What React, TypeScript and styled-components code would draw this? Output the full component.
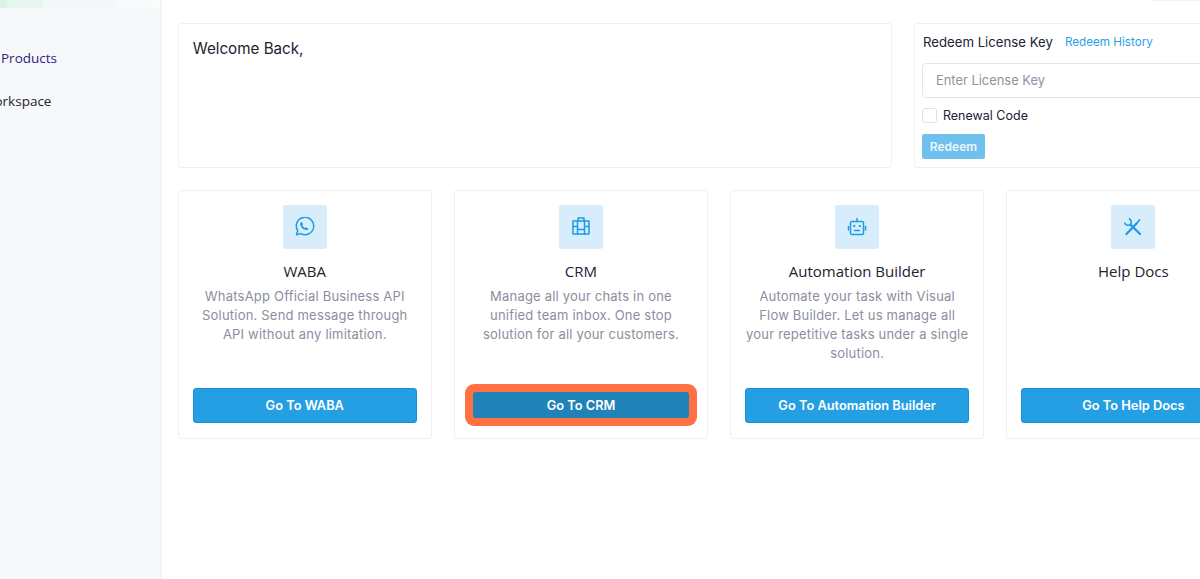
import React, { FC, ReactNode } from "react";
import styled, { createGlobalStyle } from "styled-components";

const GlobalStyle = createGlobalStyle`
  html, body {
    margin: 0;
    padding: 0;
    height: 100%;
    overflow: hidden;
    background: #fff;
  }
  * {
    box-sizing: border-box;
  }
`;

const Page = styled.div`
  position: relative;
  display: flex;
  width: 1200px;
  height: 579px;
  overflow: hidden;
  font-family: Inter, "Liberation Sans", sans-serif;
  background: #fff;
`;

const TopEdge = styled.div`
  position: absolute;
  top: 0;
  right: 0;
  width: 48px;
  height: 1px;
  background: #f1f1f9;
`;

const Sidebar = styled.aside`
  flex: 0 0 162px;
  display: flex;
  flex-direction: column;
  overflow: hidden;
  background: #f6f8fa;
  border-right: 2px solid #f2f3f5;
`;

const SidebarLogo = styled.div`
  flex: 0 0 8px;
  background: linear-gradient(
    90deg,
    #dcf3e8 0 7px,
    #e6f7ef 7px 43px,
    #f3f8f9 43px 115px,
    #f8fafb 115px 152px,
    #fbfdfc 152px
  );
`;

const NavList = styled.nav`
  display: flex;
  flex-direction: column;
  gap: 22px;
  padding-top: 40px;
`;

const NavItem = styled.div<{ $shift: number; $active?: boolean }>`
  margin-left: ${(p) => p.$shift}px;
  font-family: "Open Sans", sans-serif;
  font-size: 13.5px;
  line-height: 21px;
  white-space: nowrap;
  color: ${(p) => (p.$active ? "#2f1c82" : "#20242c")};
`;

const Main = styled.main`
  flex: 0 0 auto;
  display: flex;
  flex-direction: column;
  gap: 22px;
  padding: 23px 0 0 15.7px;
`;

const TopRow = styled.div`
  display: flex;
  gap: 21.6px;
`;

const Panel = styled.section`
  background: #fff;
  border: 1px solid #eef0f3;
  border-radius: 3px;
`;

const WelcomePanel = styled(Panel)`
  width: 714.7px;
  height: 145px;
  padding: 14px 14px;
`;

const WelcomeText = styled.div`
  font-size: 15.2px;
  line-height: 22px;
  color: #1d2233;
`;

const RedeemPanel = styled(Panel)`
  width: 340px;
  height: 145px;
  padding: 8px 7px;
`;

const RedeemHeader = styled.div`
  display: flex;
  align-items: center;
  gap: 12px;
  height: 20px;
  padding-left: 1px;
`;

const RedeemTitle = styled.div`
  font-size: 13.2px;
  color: #1d2233;
`;

const RedeemLink = styled.a`
  font-size: 11.7px;
  color: #2a9fe6;
`;

const KeyInput = styled.input`
  display: block;
  width: 100%;
  height: 35px;
  margin-top: 11px;
  padding: 0 13px;
  border: 1px solid #e3e5ea;
  border-radius: 4px;
  outline: none;
  font-family: inherit;
  font-size: 12.9px;
  &::placeholder {
    color: #8f93a3;
    opacity: 1;
  }
`;

const CheckRow = styled.label`
  display: flex;
  align-items: center;
  gap: 6px;
  margin-top: 10px;
  font-size: 12.5px;
  color: #1d2233;
`;

const CheckBox = styled.span`
  width: 15px;
  height: 15px;
  border: 1px solid #dfe1e6;
  border-radius: 3px;
  background: #fff;
`;

const RedeemButton = styled.button`
  display: block;
  width: 63px;
  height: 25px;
  margin-top: 11px;
  padding: 0;
  border: 0;
  border-radius: 2px;
  background: #70c0ee;
  color: #e9f6fd;
  font-family: inherit;
  font-size: 12px;
  font-weight: 600;
`;

const CardRow = styled.div`
  display: flex;
  gap: 22px;
`;

const Card = styled(Panel)`
  width: 254.2px;
  height: 249px;
  flex: 0 0 auto;
  display: flex;
  flex-direction: column;
  align-items: center;
  padding: 14px 14px 15px;
`;

const IconTile = styled.div`
  width: 44px;
  height: 44px;
  display: flex;
  align-items: center;
  justify-content: center;
  border-radius: 3px;
  background: #d7edfb;
  color: #1d9be4;
`;

const CardTitle = styled.h3`
  margin: 12px 0 0;
  font-family: "Open Sans", sans-serif;
  font-size: 15px;
  font-weight: 500;
  line-height: 20px;
  color: #20242c;
`;

const CardText = styled.p`
  flex: 1;
  margin: 6px 0 0;
  font-size: 13px;
  line-height: 19px;
  letter-spacing: 0.2px;
  text-align: center;
  white-space: pre-line;
  color: #8b8e9e;
`;

const CardButton = styled.button<{ $active?: boolean }>`
  align-self: stretch;
  height: ${(p) => (p.$active ? "26px" : "35px")};
  margin: ${(p) => (p.$active ? "4px 4px 5px" : "0")};
  padding: 0;
  border: ${(p) => (p.$active ? "0" : "1px solid #1b8fd6")};
  border-radius: 3px;
  background: ${(p) => (p.$active ? "#1f83ba" : "#259fe4")};
  box-shadow: ${(p) => (p.$active ? "0 0 0 8px #ff7043" : "none")};
  color: #fff;
  font-family: inherit;
  font-size: 12.8px;
  font-weight: 600;
`;

const Glyph: FC<{ children: ReactNode }> = ({ children }) => (
  <svg
    width="20"
    height="20"
    viewBox="0 0 20 20"
    fill="none"
    stroke="currentColor"
    strokeWidth="1.5"
    strokeLinecap="round"
    strokeLinejoin="round"
  >
    {children}
  </svg>
);

const WhatsappIcon = () => (
  <Glyph>
    <path d="M1.5 17.8l1.2-4.1A8.7 8.7 0 1 1 5.8 16.6z" />
    <path
      d="M6.8 4.9l1.3 2.3-.8 1a6 6 0 0 0 2.8 2.8l1-.8 2.2 1.2c-.2 1.1-1 1.7-2.1 1.6-3.4-.4-5.7-2.9-6-5.9-.1-1 .5-1.9 1.6-2.2z"
      fill="currentColor"
      stroke="none"
    />
  </Glyph>
);

const BriefcaseIcon = () => (
  <Glyph>
    <rect x="2" y="4" width="16" height="13" />
    <path d="M7 4V1h6v3M6.5 4v13M13.5 4v13M2 9.5h4.5M13.5 9.5H18M6.5 12.5h7" />
  </Glyph>
);

const RobotIcon = () => (
  <Glyph>
    <rect x="3.5" y="4.5" width="13" height="13" rx="1.5" />
    <path d="M10 1.5v3M1.5 9.5V13M18.5 9.5V13M7.5 13.5h5" />
    <path d="M7 9h.5M12.5 9h.5" strokeWidth="2" />
  </Glyph>
);

const ToolsIcon = () => (
  <Glyph>
    <path d="M3.5 17l10-10.5" strokeWidth="2.2" />
    <path d="M13.5 6.5l3-3.5" strokeWidth="1.8" />
    <path d="M17 17L7.5 7.5" strokeWidth="2.2" />
    <path d="M6.3 1.8C8.5 3 8.8 6 7.5 7.5 6 8.8 3 8.5 1.8 6.3" strokeWidth="1.6" />
  </Glyph>
);

const products = [
  {
    title: "WABA",
    text: "WhatsApp Official Business API\nSolution. Send message through\nAPI without any limitation.",
    icon: <WhatsappIcon />,
    action: "Go To WABA",
  },
  {
    title: "CRM",
    text: "Manage all your chats in one\nunified team inbox. One stop\nsolution for all your customers.",
    icon: <BriefcaseIcon />,
    action: "Go To CRM",
    active: true,
  },
  {
    title: "Automation Builder",
    text: "Automate your task with Visual\nFlow Builder. Let us manage all\nyour repetitive tasks under a single\nsolution.",
    icon: <RobotIcon />,
    action: "Go To Automation Builder",
  },
  {
    title: "Help Docs",
    text: "",
    icon: <ToolsIcon />,
    action: "Go To Help Docs",
  },
];

const App: FC = () => (
  <Page>
    <GlobalStyle />
    <TopEdge />
    <Sidebar>
      <SidebarLogo />
      <NavList>
        <NavItem $shift={1} $active>
          Products
        </NavItem>
        <NavItem $shift={-18}>Workspace</NavItem>
      </NavList>
    </Sidebar>
    <Main>
      <TopRow>
        <WelcomePanel>
          <WelcomeText>Welcome Back,</WelcomeText>
        </WelcomePanel>
        <RedeemPanel>
          <RedeemHeader>
            <RedeemTitle>Redeem License Key</RedeemTitle>
            <RedeemLink>Redeem History</RedeemLink>
          </RedeemHeader>
          <KeyInput placeholder="Enter License Key" />
          <CheckRow>
            <CheckBox />
            Renewal Code
          </CheckRow>
          <RedeemButton>Redeem</RedeemButton>
        </RedeemPanel>
      </TopRow>
      <CardRow>
        {products.map((p) => (
          <Card key={p.title}>
            <IconTile>{p.icon}</IconTile>
            <CardTitle>{p.title}</CardTitle>
            <CardText>{p.text}</CardText>
            <CardButton $active={p.active}>{p.action}</CardButton>
          </Card>
        ))}
      </CardRow>
    </Main>
  </Page>
);

export default App;
